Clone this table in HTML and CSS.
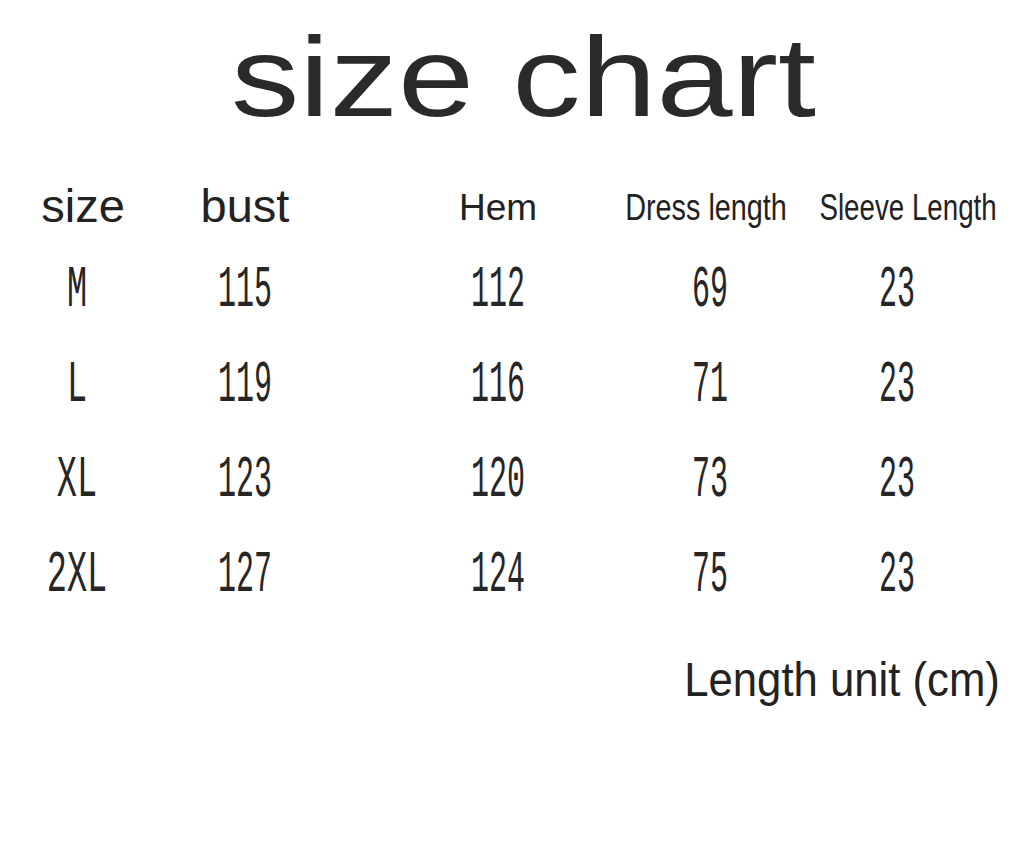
FILE: index.html
```html
<!DOCTYPE html>
<html lang="en">
<head>
<meta charset="utf-8">
<title>size chart</title>
<link rel="stylesheet" href="styles.css">
</head>
<body>
<main class="sheet">
  <h1 class="title"><span>size chart</span></h1>
  <div class="chart">
    <div class="head head-wide head-first"><span>size</span></div>
    <div class="head head-wide"><span>bust</span></div>
    <div class="head head-mid"><span>Hem</span></div>
    <div class="head head-narrow"><span class="squeeze-a">Dress length</span></div>
    <div class="head head-narrow head-last"><span class="squeeze-b">Sleeve Length</span></div>

    <div class="cell cell-size"><span>M</span></div>
    <div class="cell"><span>115</span></div>
    <div class="cell"><span>112</span></div>
    <div class="cell shift-data"><span>69</span></div>
    <div class="cell cell-last"><span>23</span></div>

    <div class="cell cell-size"><span>L</span></div>
    <div class="cell"><span>119</span></div>
    <div class="cell"><span>116</span></div>
    <div class="cell shift-data"><span>71</span></div>
    <div class="cell cell-last"><span>23</span></div>

    <div class="cell cell-size"><span>XL</span></div>
    <div class="cell"><span>123</span></div>
    <div class="cell"><span>120</span></div>
    <div class="cell shift-data"><span>73</span></div>
    <div class="cell cell-last"><span>23</span></div>

    <div class="cell cell-size"><span>2XL</span></div>
    <div class="cell"><span>127</span></div>
    <div class="cell"><span>124</span></div>
    <div class="cell shift-data"><span>75</span></div>
    <div class="cell cell-last"><span>23</span></div>
  </div>
  <p class="unit"><span>Length unit (cm)</span></p>
</main>
</body>
</html>
```
FILE: styles.css
```css
html, body {
  margin: 0;
  padding: 0;
  background: #ffffff;
}

body {
  font-family: "Liberation Sans", Arial, sans-serif;
  color: #222222;
  overflow: hidden;
}

.sheet {
  width: 1024px;
  height: 841px;
  overflow: hidden;
}

.title {
  box-sizing: border-box;
  height: 150px;
  margin: 0;
  padding: 21px 0 0 231px;
  font-size: 113px;
  font-weight: normal;
  line-height: 1;
  color: #2a2a2a;
  white-space: nowrap;
}

.title span {
  display: inline-block;
  transform: scaleX(1.21);
  transform-origin: left center;
}

.chart {
  display: grid;
  grid-template-columns: 140px 190px 316px 100px 1fr;
  grid-template-rows: 93px repeat(4, 95px);
  margin-left: 10px;
}

.head,
.cell {
  display: flex;
  justify-content: center;
  white-space: nowrap;
}

.head {
  align-items: flex-end;
  line-height: 1;
}

.head span,
.cell span {
  display: inline-block;
}

.head-wide {
  font-size: 47px;
  padding-bottom: 14px;
}

.head-first {
  padding-left: 6px;
}

.head-mid {
  font-size: 37px;
  padding-bottom: 17px;
}

.head-narrow {
  font-size: 36px;
  padding-bottom: 17px;
}

.head-last {
  padding-left: 36px;
}

.squeeze-a {
  transform: scaleX(0.8);
}

.squeeze-b {
  transform: scaleX(0.77);
}

.cell {
  align-items: flex-start;
  font-family: "Liberation Mono", "Courier New", monospace;
  font-size: 60px;
  line-height: 95px;
  color: #262626;
}

.cell span {
  transform: scaleX(0.5);
}

.cell-size {
  padding-right: 6px;
}

.cell-size span {
  transform: scaleX(0.56);
}

.shift-data {
  padding-left: 8px;
}

.cell-last {
  padding-left: 14px;
}

.unit {
  margin: 33px 0 0;
  padding-right: 24px;
  text-align: right;
  font-size: 48px;
  line-height: 1;
  color: #222222;
}

.unit span {
  display: inline-block;
  transform: scaleX(0.91);
  transform-origin: right center;
}
```
